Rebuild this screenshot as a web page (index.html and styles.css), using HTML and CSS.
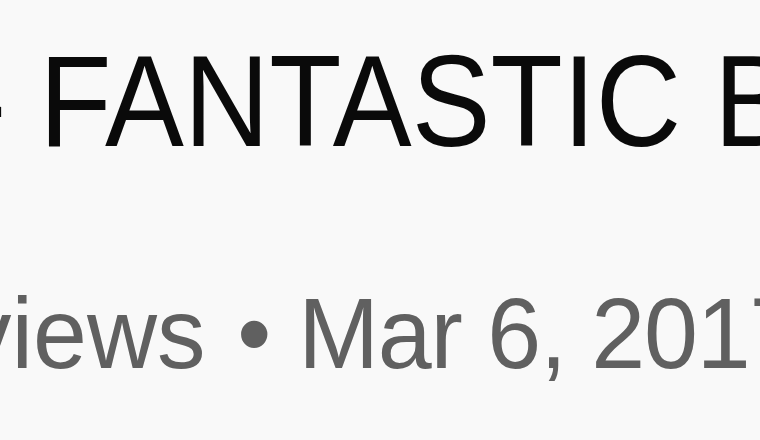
FILE: index.html
```html
<!DOCTYPE html>
<html>
<head>
<meta charset="utf-8">
<link rel="stylesheet" href="styles.css">
</head>
<body>
<div class="video-info">
  <h1 class="title">- FANTASTIC BEASTS</h1>
  <div class="meta"><span class="views">views</span> <span class="sep">•</span> <span class="date">Mar 6, 2017</span></div>
</div>
</body>
</html>
```
FILE: styles.css
```css
html, body {
  margin: 0;
  padding: 0;
  background: #f9f9f9;
  width: 760px;
  height: 440px;
  overflow: hidden;
}
.video-info {
  font-family: "Liberation Sans", Arial, sans-serif;
  white-space: nowrap;
  padding-top: 24px;
}
.title {
  margin: 0 0 0 -33px;
  font-size: 129px;
  font-weight: 400;
  line-height: 1.2;
  color: #0a0a0a;
  transform: scaleX(0.917);
  transform-origin: 0 0;
}
.meta {
  margin: 94px 0 0 -37px;
  font-size: 100px;
  line-height: 1.2;
  color: #606060;
  transform: scaleX(0.97);
  transform-origin: 0 0;
}
.sep {
  margin-left: 5px;
}
.date {
  letter-spacing: -1.3px;
}
```
